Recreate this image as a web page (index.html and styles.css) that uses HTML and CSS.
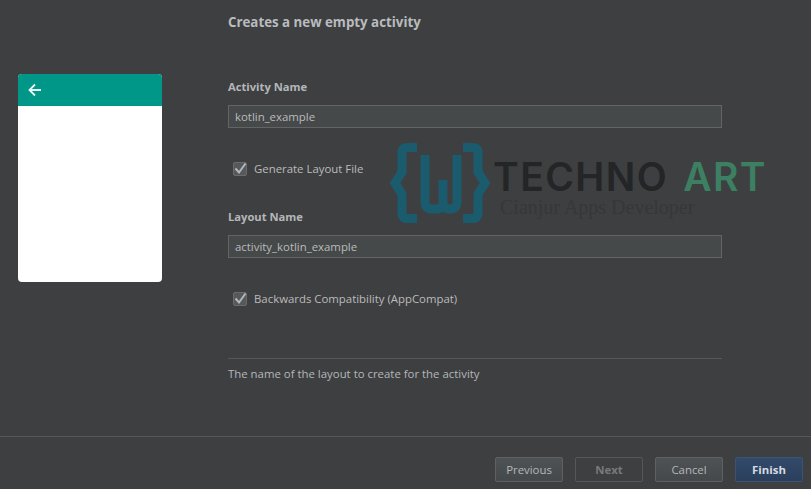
FILE: index.html
```html
<!DOCTYPE html>
<html lang="en">
<head>
<meta charset="utf-8">
<title>Creates a new empty activity</title>
<link rel="stylesheet" href="styles.css">
</head>
<body>
<div class="wizard">
  <main class="main">
    <aside class="preview">
      <div class="phone">
        <div class="appbar">
          <svg class="back" width="14" height="14" viewBox="0 0 14 14"><path d="M13 7H2M7 1.5 1.5 7 7 12.5" fill="none" stroke="#e8f8f5" stroke-width="1.8"/></svg>
        </div>
      </div>
    </aside>
    <section class="form">
      <h1 class="title">Creates a new empty activity</h1>
      <label class="label label-first">Activity Name</label>
      <div class="input">kotlin_example</div>
      <div class="check check-first"><span class="box"><svg width="14" height="14" viewBox="0 0 14 14"><path d="M2.5 6.5 6 10.5 12.5 1.5" fill="none" stroke="#b4b8ba" stroke-width="2"/></svg></span>Generate Layout File</div>
      <label class="label label-second">Layout Name</label>
      <div class="input">activity_kotlin_example</div>
      <div class="check check-second"><span class="box"><svg width="14" height="14" viewBox="0 0 14 14"><path d="M2.5 6.5 6 10.5 12.5 1.5" fill="none" stroke="#b4b8ba" stroke-width="2"/></svg></span>Backwards Compatibility (AppCompat)</div>
      <div class="hint">The name of the layout to create for the activity</div>
    </section>
  </main>
  <footer class="footer">
    <button class="btn">Previous</button>
    <button class="btn btn-off">Next</button>
    <button class="btn">Cancel</button>
    <button class="btn btn-primary">Finish</button>
  </footer>
  <div class="logo">
    <svg class="logo-mark" width="104" height="82" viewBox="0 0 104 82">
      <g fill="none" stroke="#1a5c6e" stroke-width="9">
        <path d="M28 5.5H18Q13 5.5 13 10.5V30L6 41 13 52V71.5Q13 76.5 18 76.5H28"/>
        <path d="M74 5.5H84Q89 5.5 89 10.5V30L96 41 89 52V71.5Q89 76.5 84 76.5H74"/>
        <path d="M36 13V60Q36 67 43 67H47Q54 67 54 60V38V60Q54 67 61 67Q68 67 68 60V13"/>
      </g>
    </svg>
    <div class="logo-text">
      <div class="logo-name">TECHNO<span class="logo-art">ART</span></div>
      <div class="logo-sub">Cianjur Apps Developer</div>
    </div>
  </div>
</div>
</body>
</html>
```
FILE: styles.css
```css
* { box-sizing: border-box; }
html, body { margin: 0; height: 100%; }
body {
  background: #3e3f41;
  color: #bbbbbb;
  font-family: "Open Sans", "Noto Sans", sans-serif;
  font-size: 11.4px;
  overflow: hidden;
}
.wizard {
  position: relative;
  width: 811px;
  height: 489px;
  display: flex;
  flex-direction: column;
}
.main {
  height: 437px;
  display: flex;
  padding-left: 18px;
  border-bottom: 1px solid #55585a;
}
.preview { width: 210px; padding-top: 74px; }
.phone {
  width: 144px;
  height: 208px;
  background: #fff;
  border-radius: 4px;
  overflow: hidden;
}
.appbar {
  height: 32px;
  background: #009688;
  display: flex;
  align-items: center;
  padding-left: 10px;
}
.back { display: block; }
.form { width: 494px; padding-top: 13px; }
.title {
  margin: 0;
  font-size: 13.3px;
  line-height: 18px;
  font-weight: 700;
  color: #b9bcbe;
}
.label {
  display: block;
  font-weight: 700;
  font-size: 11.2px;
  line-height: 16px;
  color: #b4b7b9;
}
.label-first { margin-top: 48px; }
.label-second { margin-top: 31px; }
.input {
  height: 23px;
  margin-top: 10px;
  padding-left: 6px;
  background: #45494a;
  border: 1px solid #646464;
  line-height: 21px;
  color: #bbbbbb;
}
.check {
  display: flex;
  align-items: center;
  gap: 7px;
  height: 18px;
  line-height: 18px;
}
.check-first { margin-top: 32px; }
.check-second { margin-top: 32px; }
.box {
  width: 14px;
  height: 14px;
  background: #55595b;
  border: 1px solid #6b6b6b;
  border-radius: 2px;
  display: block;
  margin-left: 5px;
}
.box svg { display: block; margin: -1px; }
.hint {
  margin-top: 50px;
  padding-top: 7px;
  border-top: 1px solid #55585a;
  line-height: 16px;
  color: #b4b7b9;
}
.footer {
  flex: 1;
  display: flex;
  justify-content: flex-end;
  align-items: flex-start;
  gap: 12px;
  padding: 20px 8px 0 0;
}
.btn {
  width: 68px;
  height: 25px;
  padding: 0;
  font: inherit;
  color: #b4b7b9;
  background: linear-gradient(#4e5254, #45494b);
  border: 1px solid #5e6163;
  border-radius: 2px;
}
.btn-off {
  background: none;
  border-color: #55585a;
  color: #77797a;
  font-weight: 700;
}
.btn-primary {
  background: linear-gradient(#324a6b, #2a3f5c);
  border-color: #3c5375;
  color: #d6dbe0;
  font-weight: 700;
}
.logo {
  position: absolute;
  left: 389px;
  top: 142px;
  display: flex;
}
.logo-mark { display: block; }
.logo-text { margin: 15px 0 0 0; }
.logo-name {
  font-family: Inter, sans-serif;
  font-weight: 600;
  font-size: 39px;
  line-height: 40px;
  letter-spacing: 1.4px;
  color: #232527;
  white-space: nowrap;
}
.logo-art { color: #3c7f62; margin-left: 15px; }
.logo-sub {
  font-family: "Liberation Serif", serif;
  font-size: 20px;
  line-height: 20px;
  margin: 0 0 0 7px;
  color: #35383a;
  white-space: nowrap;
}
```
